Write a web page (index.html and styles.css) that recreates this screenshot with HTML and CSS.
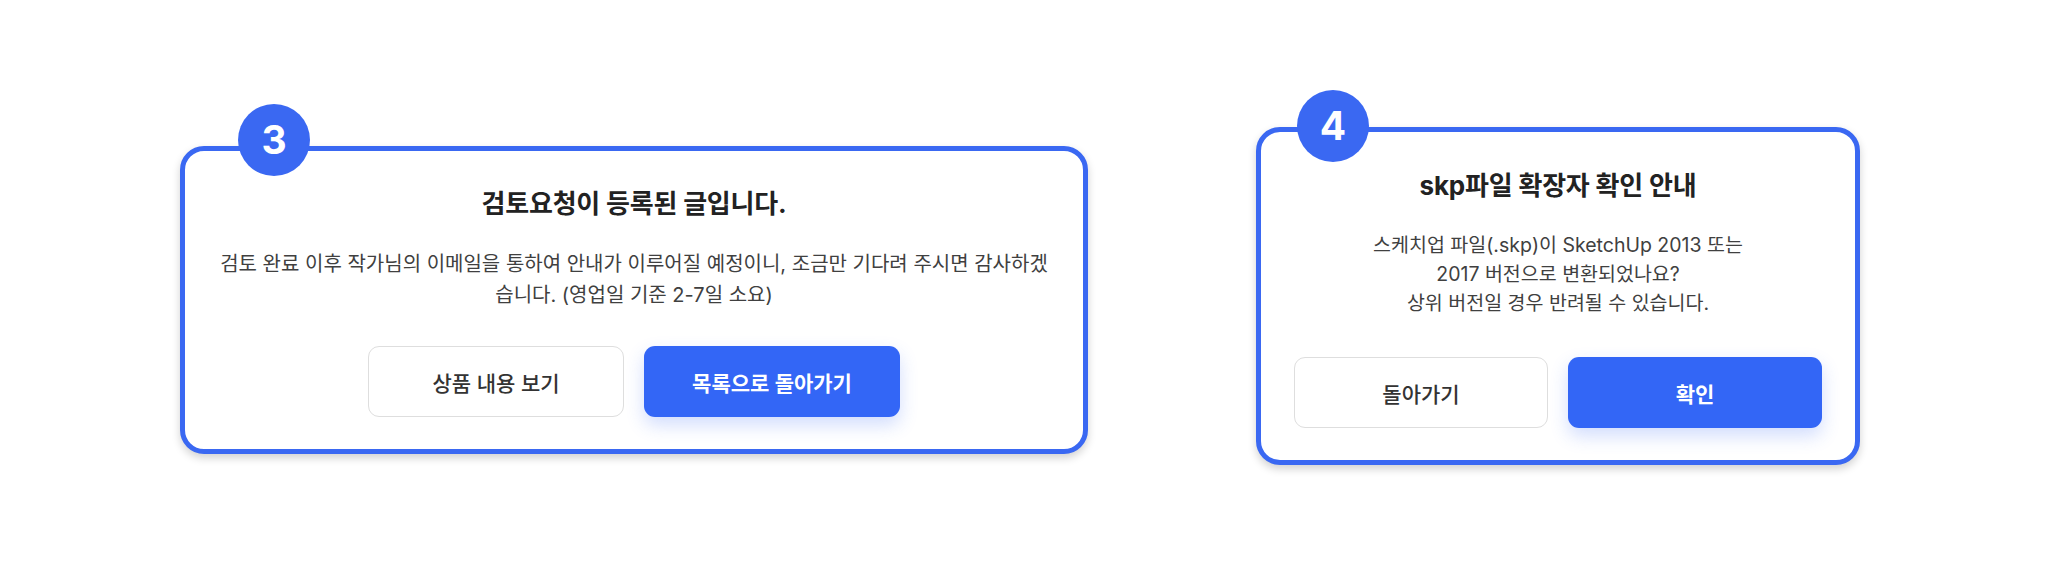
FILE: index.html
```html
<!DOCTYPE html>
<html lang="ko">
<head>
<meta charset="utf-8">
<title>안내 모달</title>
<link rel="stylesheet" href="styles.css">
</head>
<body>
<main class="stage">
  <section class="card card-wide">
    <span class="badge">3</span>
    <h2 class="title">검토요청이 등록된 글입니다.</h2>
    <p class="desc">검토 완료 이후 작가님의 이메일을 통하여 안내가 이루어질 예정이니, 조금만 기다려 주시면 감사하겠<br>습니다. (영업일 기준 2-7일 소요)</p>
    <div class="actions">
      <button class="btn btn-outline" type="button">상품 내용 보기</button>
      <button class="btn btn-primary" type="button">목록으로 돌아가기</button>
    </div>
  </section>
  <section class="card card-narrow">
    <span class="badge">4</span>
    <h2 class="title">skp파일 확장자 확인 안내</h2>
    <p class="desc">스케치업 파일(.skp)이 SketchUp 2013 또는<br>2017 버전으로 변환되었나요?<br>상위 버전일 경우 반려될 수 있습니다.</p>
    <div class="actions">
      <button class="btn btn-outline" type="button">돌아가기</button>
      <button class="btn btn-primary" type="button">확인</button>
    </div>
  </section>
</main>
</body>
</html>
```
FILE: styles.css
```css
html, body {
  margin: 0;
  padding: 0;
  background: #ffffff;
}

body {
  font-family: Inter, "Noto Sans CJK KR", sans-serif;
  color: #222222;
}

.stage {
  display: flex;
  align-items: flex-start;
  gap: 168px;
  padding-left: 180px;
  height: 587px;
  box-sizing: border-box;
}

.card {
  position: relative;
  box-sizing: border-box;
  flex: none;
  background: #ffffff;
  border: 5px solid #3a68f2;
  border-radius: 24px;
  box-shadow: 0 4px 8px rgba(0, 0, 0, 0.18);
  padding: 37px 33px 32px;
  text-align: center;
}

.card-wide {
  width: 908px;
  margin-top: 146px;
}

.card-narrow {
  width: 604px;
  margin-top: 127px;
  padding-top: 38px;
}

.badge {
  position: absolute;
  width: 72px;
  height: 72px;
  border-radius: 50%;
  background: #3a68f2;
  color: #ffffff;
  font-family: Inter, "Noto Sans CJK KR", sans-serif;
  font-weight: 700;
  font-size: 39px;
  line-height: 72px;
  text-align: center;
}

.card-wide .badge {
  left: 53px;
  top: -47px;
}

.card-narrow .badge {
  left: 36px;
  top: -42px;
}

.title {
  margin: 0;
  font-size: 26px;
  line-height: 31px;
  font-weight: 700;
  color: #222222;
  letter-spacing: -0.2px;
}

.desc {
  margin: 30px 0 0;
  font-size: 20px;
  line-height: 30.5px;
  font-weight: 400;
  color: #404040;
  white-space: nowrap;
}

.card-narrow .desc {
  margin-top: 29.5px;
  font-size: 19.5px;
  line-height: 29px;
}

.actions {
  display: flex;
  justify-content: center;
  gap: 20px;
  margin-top: 36px;
}

.card-narrow .actions {
  margin-top: 39.5px;
}

.btn {
  width: 256px;
  height: 71px;
  box-sizing: border-box;
  border-radius: 11px;
  font-family: Inter, "Noto Sans CJK KR", sans-serif;
  font-size: 21px;
  cursor: pointer;
}

.btn-outline {
  background: #ffffff;
  border: 1px solid #dedede;
  color: #333333;
  font-weight: 500;
}

.btn-primary {
  background: #3366f6;
  border: none;
  color: #ffffff;
  font-weight: 600;
  box-shadow: 0 8px 18px rgba(51, 102, 246, 0.22);
}
```
